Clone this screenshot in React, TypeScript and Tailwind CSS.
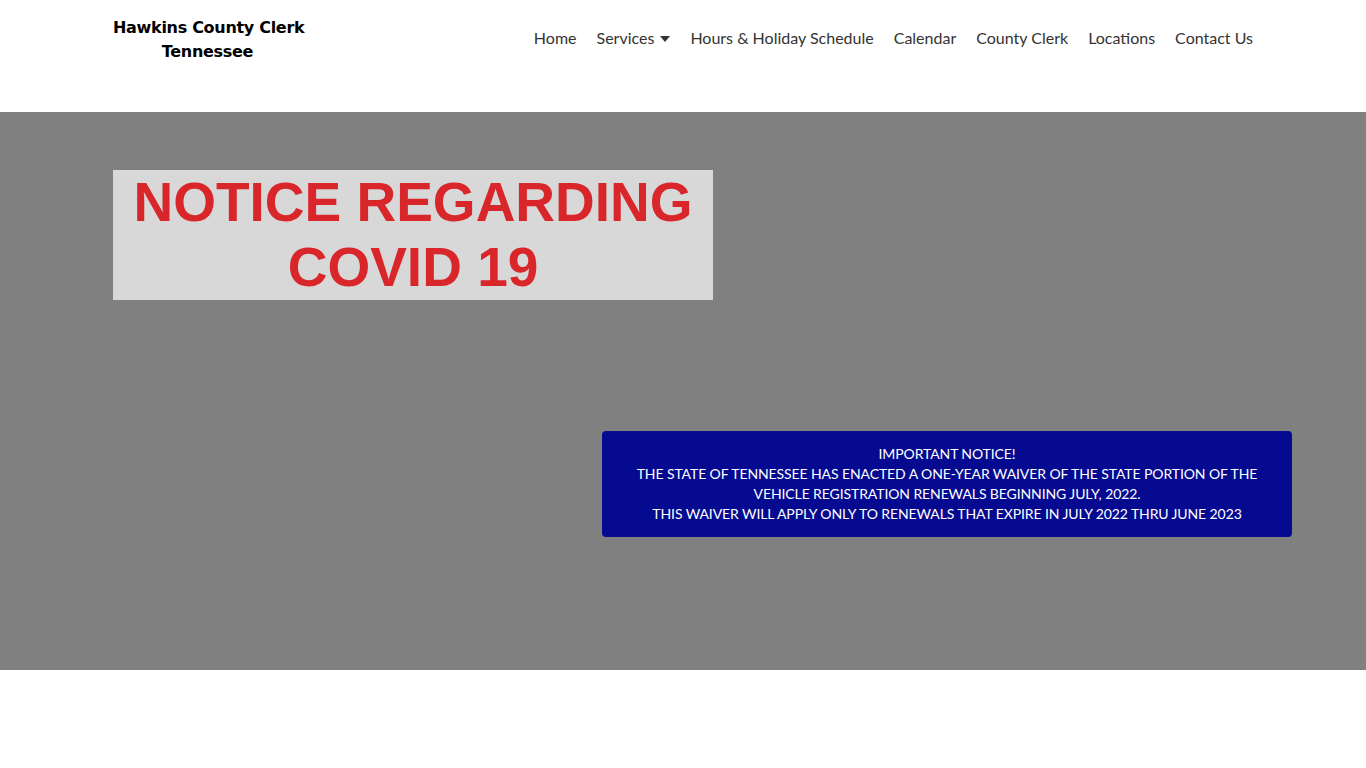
export default function App() {
  const nav = ["Home", "Services", "Hours & Holiday Schedule", "Calendar", "County Clerk", "Locations", "Contact Us"];
  return (
    <div className="min-h-screen bg-white" style={{ fontFamily: "Lato, 'Open Sans', sans-serif" }}>
      <header className="h-[112px] bg-white">
        <div className="mx-auto flex w-[1140px] items-start justify-between pt-[16px]">
          <div
            className="w-[189px] whitespace-nowrap text-center text-[16px] font-bold leading-[24px] text-black"
            style={{ fontFamily: "'DejaVu Sans', sans-serif", letterSpacing: "-0.3px" }}
          >
            Hawkins County Clerk
            <br />
            Tennessee
          </div>
          <nav className="flex items-center gap-[20px] pt-[10px] text-[16px] text-[#333333]">
            {nav.map((n) => (
              <span key={n} className="flex items-center gap-[6px]">
                {n}
                {n === "Services" && (
                  <svg width="10" height="6" viewBox="0 0 10 6" className="mt-[1px]">
                    <path d="M0 0h10L5 6z" fill="#333333" />
                  </svg>
                )}
              </span>
            ))}
          </nav>
        </div>
      </header>
      <section className="h-[558px] bg-[#808080] pt-[58px]">
        <div className="mx-auto w-[1140px]">
          <div
            className="flex h-[130px] w-[600px] flex-col items-center justify-center bg-[#d8d8d8] text-center text-[55px] font-bold leading-[65px] text-[#d9262b]"
            style={{ fontFamily: "'Liberation Sans', Arial, sans-serif" }}
          >
            <span>NOTICE REGARDING</span>
            <span>COVID 19</span>
          </div>
          <div
            className="ml-[489px] mt-[131px] w-[690px] rounded-[4px] bg-[#050a91] px-4 pb-[13px] pt-[13px] text-center text-[14px] leading-[20px] text-white"
            style={{ letterSpacing: "-0.1px" }}
          >
            IMPORTANT NOTICE!
            <br />
            THE STATE OF TENNESSEE HAS ENACTED A ONE-YEAR WAIVER OF THE STATE PORTION OF THE
            <br />
            VEHICLE REGISTRATION RENEWALS BEGINNING JULY, 2022.
            <br />
            THIS WAIVER WILL APPLY ONLY TO RENEWALS THAT EXPIRE IN JULY 2022 THRU JUNE 2023
          </div>
        </div>
      </section>
    </div>
  );
}
